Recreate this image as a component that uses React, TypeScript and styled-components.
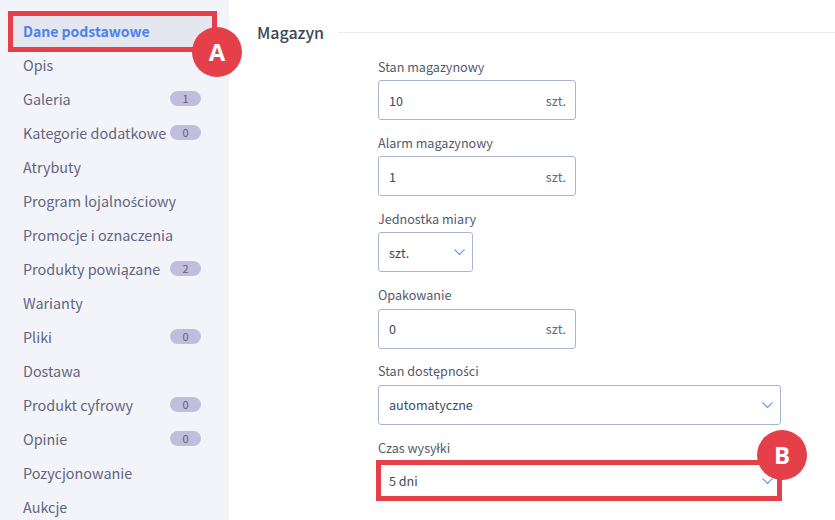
import React from 'react'
import styled, { createGlobalStyle } from 'styled-components'

const GlobalStyle = createGlobalStyle`
  html, body {
    margin: 0;
    padding: 0;
    background: #fff;
  }
  body {
    font-family: "Noto Sans CJK SC", "Noto Sans", sans-serif;
  }
`

const Page = styled('div')`
  position: relative;
  display: flex;
  width: 835px;
  height: 520px;
  overflow: hidden;
  background: #fff;
`

const Sidebar = styled('nav')`
  box-sizing: border-box;
  flex: none;
  width: 229px;
  padding: 13px 17px 0 13px;
  background: #f3f4f9;
`

const MenuItem = styled('div')<{ $active?: boolean }>`
  display: flex;
  align-items: center;
  justify-content: space-between;
  box-sizing: border-box;
  height: 34px;
  padding: ${p => (p.$active ? '2px' : '0')} 11px 0 10px;
  font-size: ${p => (p.$active ? 14 : 14.4)}px;
  font-weight: ${p => (p.$active ? 700 : 400)};
  color: ${p => (p.$active ? '#4c82f0' : '#62657f')};
  background: ${p => (p.$active ? '#e4e6f0' : 'transparent')};
  white-space: nowrap;
`

const Badge = styled('span')`
  flex: none;
  width: 31px;
  height: 15px;
  border-radius: 8px;
  background: #c3bddd;
  color: #5f5d7c;
  font-size: 11px;
  line-height: 15px;
  text-align: center;
`

const SAcute = styled('span')`
  font-family: "Noto Sans", sans-serif;
  font-size: 0.93em;
`

const Content = styled('main')`
  flex: 1;
  padding: 20px 0 0 28px;
`

const SectionHead = styled('div')`
  display: flex;
  align-items: center;
  gap: 14px;
  height: 25px;
`

const SectionTitle = styled('h2')`
  margin: 0;
  font-size: 16px;
  font-weight: 500;
  line-height: 25px;
  color: #3b4656;
`

const Rule = styled('div')`
  flex: 1;
  height: 1px;
  background: #e9ebef;
`

const Form = styled('div')`
  display: flex;
  flex-direction: column;
  gap: 13.2px;
  margin: 12px 0 0 121px;
`

const Field = styled('div')`
  display: flex;
  flex-direction: column;
  align-items: flex-start;
`

const Label = styled('label')`
  margin: -0.4px 0 3.4px;
  font-size: 12.6px;
  line-height: 20px;
  color: #53596c;
`

const Control = styled('div')<{ $width: number }>`
  display: flex;
  align-items: center;
  justify-content: space-between;
  box-sizing: border-box;
  width: ${p => p.$width}px;
  height: 40px;
  padding: 0 10px;
  border: 1px solid #a8b6d2;
  border-radius: 3px;
  background: #fff;
  font-size: 12.6px;
  color: #414a5c;
`

const Unit = styled('span')`
  margin-right: -1px;
  color: #62697c;
`

const Chevron = styled('svg')`
  flex: none;
  width: 11px;
  height: 6px;
  margin-right: -3px;
  fill: none;
  stroke: #5c97ee;
  stroke-width: 1.1;
`

const Highlight = styled('div')<{ $left: number; $top: number; $width: number; $height: number }>`
  position: absolute;
  box-sizing: border-box;
  left: ${p => p.$left}px;
  top: ${p => p.$top}px;
  width: ${p => p.$width}px;
  height: ${p => p.$height}px;
  border: 5px solid #e5404a;
`

const Marker = styled('div')<{ $left: number; $top: number }>`
  position: absolute;
  left: ${p => p.$left}px;
  top: ${p => p.$top}px;
  width: 50px;
  height: 50px;
  border-radius: 50%;
  background: #e5404a;
  color: #fff;
  font-family: "Open Sans", sans-serif;
  font-size: 24px;
  font-weight: 700;
  line-height: 50px;
  text-align: center;
`

const menu: { label: string; count?: number }[] = [
  { label: 'Dane podstawowe' },
  { label: 'Opis' },
  { label: 'Galeria', count: 1 },
  { label: 'Kategorie dodatkowe', count: 0 },
  { label: 'Atrybuty' },
  { label: 'Program lojalnościowy' },
  { label: 'Promocje i oznaczenia' },
  { label: 'Produkty powiązane', count: 2 },
  { label: 'Warianty' },
  { label: 'Pliki', count: 0 },
  { label: 'Dostawa' },
  { label: 'Produkt cyfrowy', count: 0 },
  { label: 'Opinie', count: 0 },
  { label: 'Pozycjonowanie' },
  { label: 'Aukcje' },
]

const fields = [
  { label: 'Stan magazynowy', value: '10', width: 198, kind: 'unit' },
  { label: 'Alarm magazynowy', value: '1', width: 198, kind: 'unit' },
  { label: 'Jednostka miary', value: 'szt.', width: 95, kind: 'select' },
  { label: 'Opakowanie', value: '0', width: 198, kind: 'unit' },
  { label: 'Stan dostępności', value: 'automatyczne', width: 403, kind: 'select' },
  { label: 'Czas wysyłki', value: '5 dni', width: 403, kind: 'select' },
]

const withAccent = (text: string) => {
  const [before, after] = text.split('ś')
  if (after === undefined) return text
  return (
    <span>
      {before}
      <SAcute>ś</SAcute>
      {after}
    </span>
  )
}

export default function App() {
  return (
    <Page>
      <GlobalStyle />
      <Sidebar>
        {menu.map((item, i) => (
          <MenuItem key={item.label} $active={i === 0}>
            {withAccent(item.label)}
            {item.count !== undefined && <Badge>{item.count}</Badge>}
          </MenuItem>
        ))}
      </Sidebar>
      <Content>
        <SectionHead>
          <SectionTitle>Magazyn</SectionTitle>
          <Rule />
        </SectionHead>
        <Form>
          {fields.map(f => (
            <Field key={f.label}>
              <Label>{withAccent(f.label)}</Label>
              <Control $width={f.width}>
                {f.value}
                {f.kind === 'unit' ? (
                  <Unit>szt.</Unit>
                ) : (
                  <Chevron viewBox="0 0 11 6">
                    <path d="M0.4 0.4 L5.5 5.5 L10.6 0.4" />
                  </Chevron>
                )}
              </Control>
            </Field>
          ))}
        </Form>
      </Content>
      <Highlight $left={8} $top={11} $width={209} $height={41} />
      <Marker $left={192} $top={27}>A</Marker>
      <Highlight $left={376} $top={460} $width={406} $height={41} />
      <Marker $left={757} $top={430}>B</Marker>
    </Page>
  )
}
